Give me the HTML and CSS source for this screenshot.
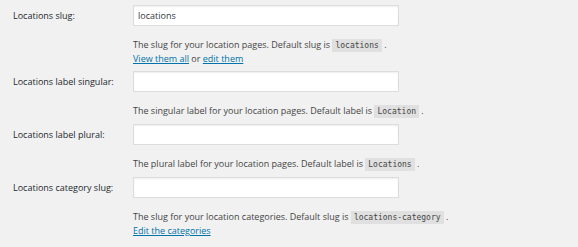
FILE: index.html
```html
<!DOCTYPE html>
<html lang="en">
<head>
  <meta charset="UTF-8" />
  <title>Locations settings</title>
  <link rel="stylesheet" href="styles.css">
</head>
<body>
  <div class="form-table">
    <div class="field">
      <label class="field-label" for="slug">Locations slug:</label>
      <div class="field-body">
        <input type="text" id="slug" class="regular-text" value="locations" />
        <p class="description">The slug for your location pages. Default slug is <code>locations</code> .<br>
          <a href="#">View them all</a> or <a href="#">edit them</a></p>
      </div>
    </div>
    <div class="field">
      <label class="field-label" for="singular">Locations label singular:</label>
      <div class="field-body">
        <input type="text" id="singular" class="regular-text" />
        <p class="description">The singular label for your location pages. Default label is <code>Location</code> .</p>
      </div>
    </div>
    <div class="field">
      <label class="field-label" for="plural">Locations label plural:</label>
      <div class="field-body">
        <input type="text" id="plural" class="regular-text" />
        <p class="description">The plural label for your location pages. Default label is <code>Locations</code> .</p>
      </div>
    </div>
    <div class="field">
      <label class="field-label" for="catslug">Locations category slug:</label>
      <div class="field-body">
        <input type="text" id="catslug" class="regular-text" />
        <p class="description">The slug for your location categories. Default slug is <code>locations-category</code> .<br>
          <a href="#">Edit the categories</a></p>
      </div>
    </div>
    <div class="field">
      <label class="field-label">Opening hours:</label>
      <div class="field-body"></div>
    </div>
  </div>
</body>
</html>
```

FILE: styles.css
```css
body {
  margin: 0;
  padding: 0;
  background-color: #f1f1f1;
  color: #23282d;
  font-family: 'Open Sans', sans-serif;
  font-size: 9px;
}

.form-table {
  padding-top: 5px;
}

.field {
  display: grid;
  grid-template-columns: 133px 266px;
  margin-bottom: 6px;
}

.field-label {
  padding-left: 13px;
  height: 21px;
  line-height: 21px;
  color: #23282d;
}

.regular-text {
  box-sizing: border-box;
  display: block;
  width: 266px;
  height: 21px;
  margin: 0;
  padding: 0 4px;
  border: 1px solid #ddd;
  background-color: #fff;
  box-shadow: inset 0 1px 2px rgba(0,0,0,0.07);
  font-family: 'Open Sans', sans-serif;
  font-size: 9px;
  color: #32373c;
  outline: none;
}

.description {
  margin: 12px 0 0;
  line-height: 13px;
  color: #444;
  white-space: nowrap;
}

.description code {
  font-family: 'DejaVu Sans Mono', monospace;
  font-size: 8px;
  background-color: rgba(0,0,0,0.07);
  padding: 2px 3px 2px;
  color: #444;
}

.description a {
  color: #0073aa;
  text-decoration: underline;
}
```
